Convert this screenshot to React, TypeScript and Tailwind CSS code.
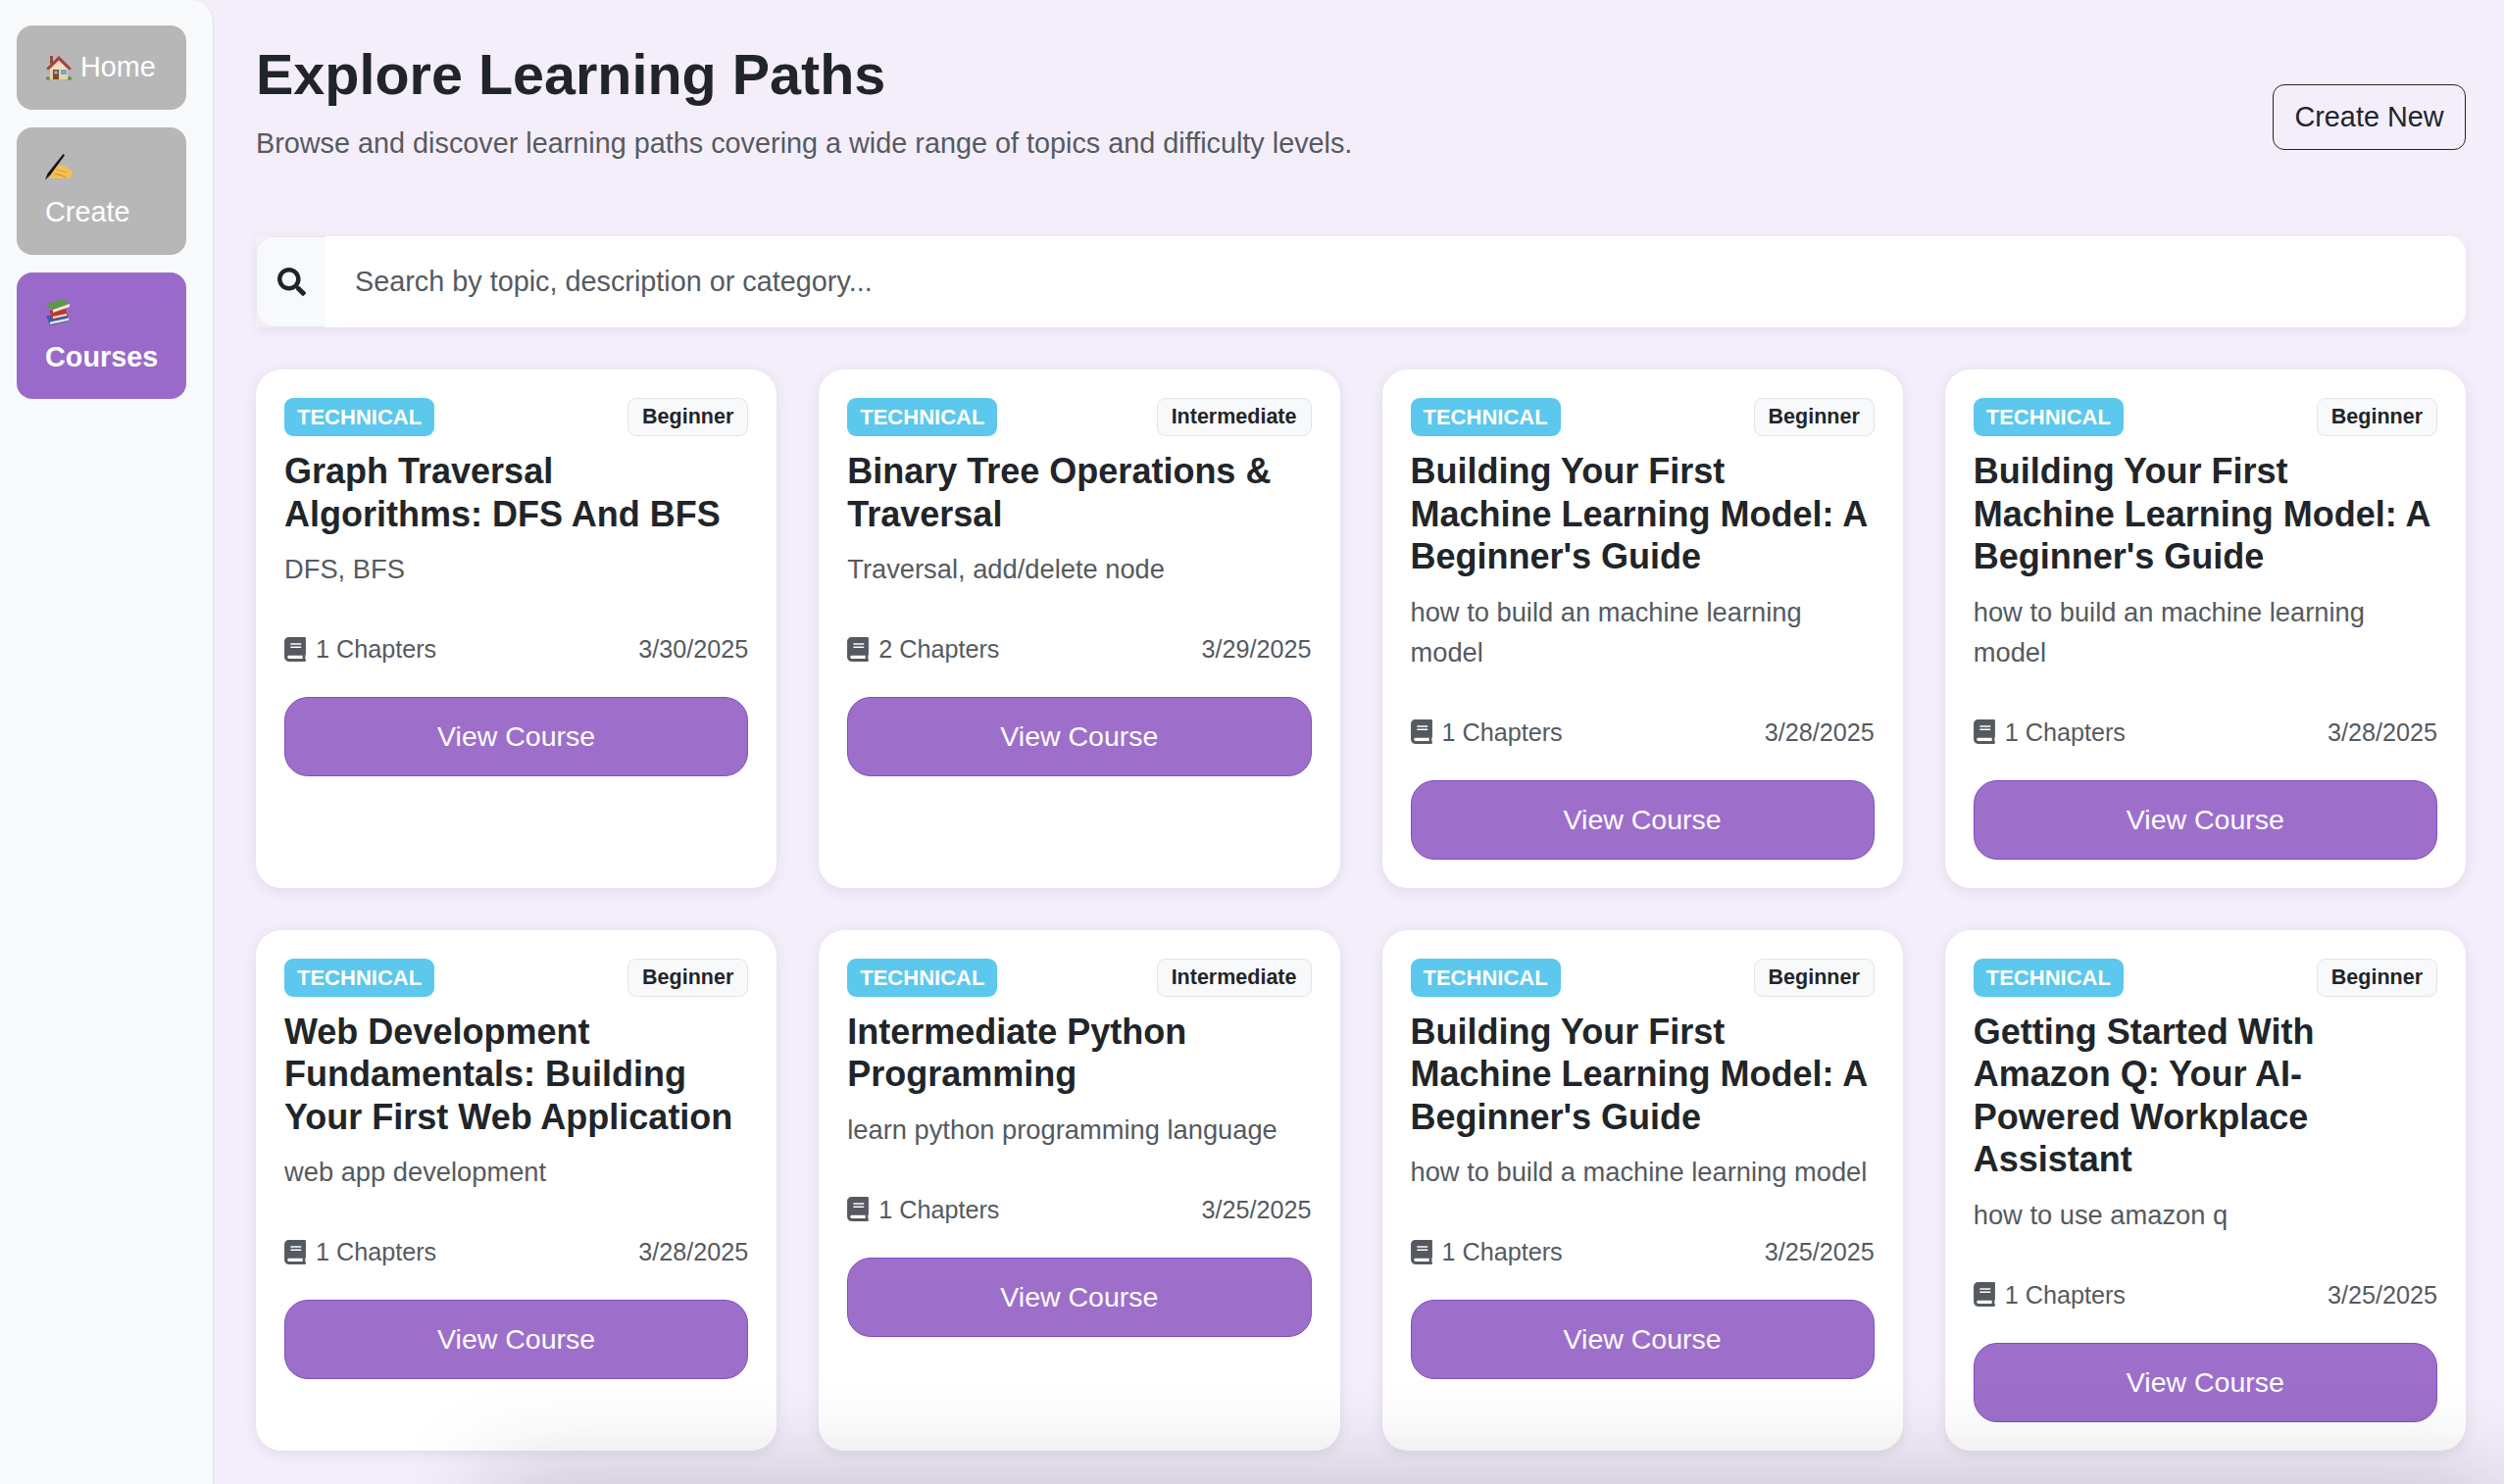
import { FaBook, FaSearch } from 'react-icons/fa';

const courses = [
  { title: 'Graph Traversal Algorithms: DFS And BFS', desc: 'DFS, BFS', level: 'Beginner', chapters: 1, date: '3/30/2025' },
  { title: 'Binary Tree Operations & Traversal', desc: 'Traversal, add/delete node', level: 'Intermediate', chapters: 2, date: '3/29/2025' },
  { title: "Building Your First Machine Learning Model: A Beginner's Guide", desc: 'how to build an machine learning model', level: 'Beginner', chapters: 1, date: '3/28/2025' },
  { title: "Building Your First Machine Learning Model: A Beginner's Guide", desc: 'how to build an machine learning model', level: 'Beginner', chapters: 1, date: '3/28/2025' },
  { title: 'Web Development Fundamentals: Building Your First Web Application', desc: 'web app development', level: 'Beginner', chapters: 1, date: '3/28/2025' },
  { title: 'Intermediate Python Programming', desc: 'learn python programming language', level: 'Intermediate', chapters: 1, date: '3/25/2025' },
  { title: "Building Your First Machine Learning Model: A Beginner's Guide", desc: 'how to build a machine learning model', level: 'Beginner', chapters: 1, date: '3/25/2025' },
  { title: 'Getting Started With Amazon Q: Your AI-Powered Workplace Assistant', desc: 'how to use amazon q', level: 'Beginner', chapters: 1, date: '3/25/2025' },
];

function HouseIcon() {
  return (
    <svg viewBox="0 0 28 28" className="h-[28px] w-[28px] shrink-0">
      <rect x="5" y="2" width="3" height="8" fill="#8a4b3a" />
      <rect x="5" y="13" width="18" height="13" fill="#e8d3a8" />
      <path d="M14 6 L4 16 L24 16 Z" fill="#f0dfc0" />
      <path d="M14 2 L1 15 L3.5 16.5 L14 6.5 L24.5 16.5 L27 15 Z" fill="#a8403a" />
      <rect x="8" y="16" width="6" height="10" fill="#7a4a2e" />
      <rect x="9.5" y="17.5" width="3" height="3" fill="#8fc0e0" />
      <rect x="16" y="16" width="6" height="5" fill="#6fa8d8" />
      <circle cx="3" cy="25" r="2" fill="#5c9a3c" />
      <circle cx="25" cy="25" r="2" fill="#5c9a3c" />
    </svg>
  );
}

function WritingHandIcon() {
  return (
    <svg viewBox="0 0 28 28" className="h-[28px] w-[28px]">
      <path d="M3 21 C7 15 11 12 16 12 C20 12 25 15 27.5 18 C28.5 22 26 25 23 25 L9 25 C6 25 4 24 3 21 Z" fill="#f4bf55" />
      <path d="M9 21 C13 20 17 22 21 24" stroke="#c68a2e" strokeWidth="1" fill="none" />
      <path d="M11 16 C14 17 18 17 22 19" stroke="#dc9f3c" strokeWidth="1" fill="none" />
      <path d="M18.5 0 L20 1.5 L5 22 L0 26.5 L2.5 20 Z" fill="#161616" />
    </svg>
  );
}

function BooksIcon() {
  return (
    <svg viewBox="0 0 28 28" className="h-[28px] w-[28px]">
      <path d="M1 17 L22 14 L24 23 L5 27 Z" fill="#3f5aa8" />
      <path d="M5 23.5 L24 19.5 L24 22 L5 26 Z" fill="#e8e4dc" />
      <path d="M4 12 L21 10 L23 17 L8 21 Z" fill="#c0392b" />
      <path d="M8 18 L22 15 L22 17 L8 20 Z" fill="#efe9df" />
      <path d="M0 6 L17 0 L25 5 L8 11 Z" fill="#5c9a4a" />
      <path d="M8 11 L25 5 L25 8 L8 14 Z" fill="#eee8dc" />
    </svg>
  );
}

function Sidebar() {
  return (
    <aside className="flex h-[1514px] w-[218px] shrink-0 flex-col gap-[18px] rounded-tr-[22px] border-r border-[#e3e0e8] bg-[#f8f9fa] px-[17px] pt-[26px] text-[28.8px] text-white">
      <div className="flex h-[86px] w-[173px] items-center gap-[8px] rounded-[16px] bg-[#b7b7b8] pl-[29px]">
        <HouseIcon />
        <span>Home</span>
      </div>
      <div className="flex h-[130px] w-[173px] flex-col justify-center gap-[10px] rounded-[16px] bg-[#b7b7b8] pt-[6px] pl-[29px]">
        <WritingHandIcon />
        <span>Create</span>
      </div>
      <div className="flex h-[129px] w-[173px] flex-col justify-center gap-[10px] rounded-[16px] bg-[#9a6aca] pt-[6px] pl-[29px] font-bold">
        <BooksIcon />
        <span>Courses</span>
      </div>
    </aside>
  );
}

function CourseCard({ course }: { course: (typeof courses)[number] }) {
  return (
    <div className="flex flex-col rounded-[26px] bg-white p-[29px] shadow-[0_3px_14px_rgba(60,40,90,0.1)]">
      <div className="mb-[14px] flex items-center justify-between">
        <span className="flex h-[39px] items-center rounded-[9px] bg-[#5cc8ee] px-[13px] text-[22px] font-bold text-white">TECHNICAL</span>
        <span className="flex h-[39px] items-center rounded-[9px] border border-[#e2e5e9] bg-[#f8f9fa] px-[14px] text-[21.5px] font-bold text-[#212529]">{course.level}</span>
      </div>
      <h3 className="mb-[14px] text-[36px] leading-[43.5px] font-bold text-[#212529]">{course.title}</h3>
      <p className="mb-[42px] text-[27.3px] leading-[41px] text-[#555a60]">{course.desc}</p>
      <div className="mb-[30px] flex items-center justify-between text-[25.2px] leading-[38px] text-[#555a60]">
        <span className="flex items-center gap-[10px]">
          <FaBook className="h-[25px] w-[22px]" />
          {course.chapters} Chapters
        </span>
        <span>{course.date}</span>
      </div>
      <button className="h-[81px] rounded-[24px] border border-[#7e4fbd] bg-[#9d6fcb] text-[28.5px] text-white">View Course</button>
    </div>
  );
}

export default function App() {
  return (
    <div className="relative flex h-[1514px] w-[2554px] overflow-hidden bg-[#f4eefb] font-['Liberation_Sans',Arial,sans-serif]">
      <Sidebar />
      <main className="min-w-0 flex-1 pt-[40px] pr-[39px] pl-[43px]">
        <header className="mb-[74px] flex items-center justify-between">
          <div>
            <h1 className="mb-[13px] text-[57.5px] leading-[72px] font-bold text-[#212529]">Explore Learning Paths</h1>
            <p className="text-[28.8px] leading-[42px] text-[#555a60]">Browse and discover learning paths covering a wide range of topics and difficulty levels.</p>
          </div>
          <button className="mt-[32px] h-[67px] w-[197px] rounded-[12px] border border-[#212529] text-[28.8px] text-[#212529]">Create New</button>
        </header>
        <div className="mb-[43px] h-[93px] shadow-[0_3px_10px_rgba(60,40,90,0.07)]">
          <div className="flex h-full overflow-hidden rounded-[18px] bg-white">
            <div className="flex w-[71px] shrink-0 items-center justify-center rounded-l-[18px] border border-r-0 border-[#e6e6ea] bg-[#f8f9fa] text-[#212529]">
              <FaSearch className="h-[29px] w-[29px]" />
            </div>
            <div className="flex items-center pl-[30px] text-[28.8px] text-[#555a60]">Search by topic, description or category...</div>
          </div>
        </div>
        <div className="grid grid-cols-4 gap-x-[43px] gap-y-[43px]">
          {courses.map((course, i) => (
            <CourseCard key={i} course={course} />
          ))}
        </div>
      </main>
      {/* shadow of something just below the fold */}
      <div className="pointer-events-none absolute top-[1514px] right-0 left-[500px] h-[100px] shadow-[0_0_100px_0_rgba(40,40,40,0.26)]" />
    </div>
  );
}
